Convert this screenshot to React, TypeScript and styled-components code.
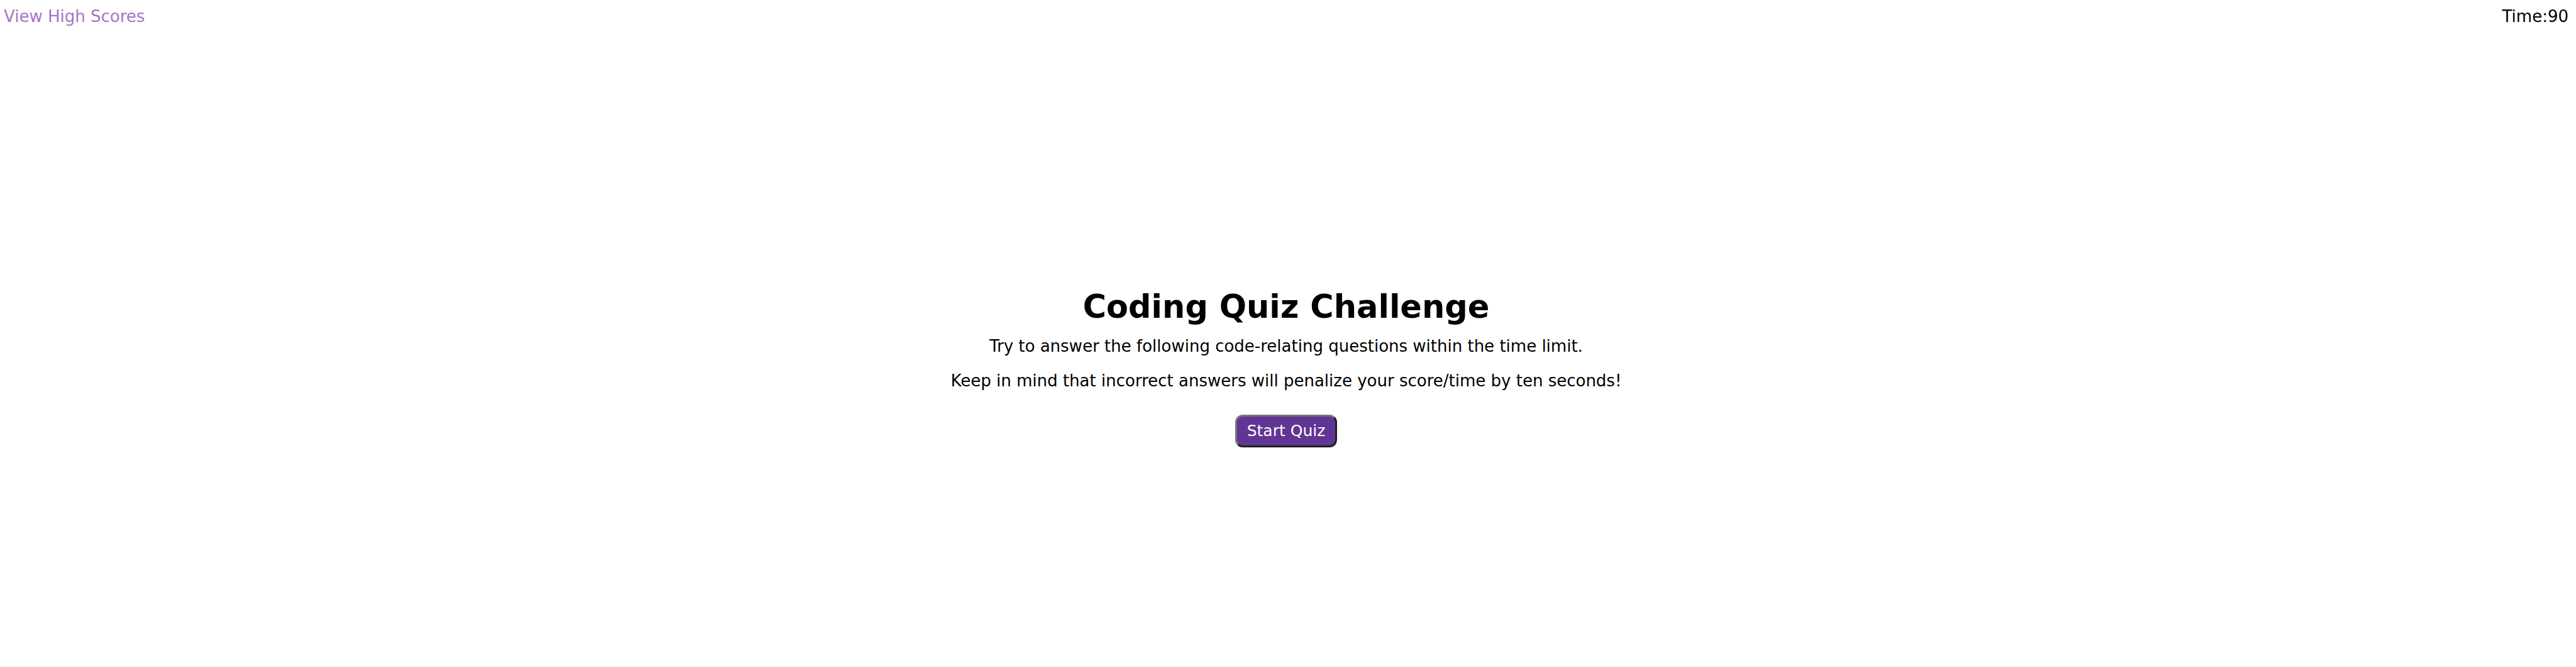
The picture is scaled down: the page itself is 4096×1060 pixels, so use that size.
import React from "react";
import styled, { createGlobalStyle } from "styled-components";

const GlobalStyle = createGlobalStyle`
  * {
    box-sizing: border-box;
  }
  body {
    margin: 0;
    background: #ffffff;
    color: #000000;
    font-family: Verdana, "DejaVu Sans", sans-serif;
    font-size: 26px;
    line-height: 32px;
  }
`;

const Page = styled.div`
  display: flex;
  flex-direction: column;
  min-height: 100vh;
`;

const TopBar = styled.header`
  display: flex;
  justify-content: space-between;
  padding: 10px 12px 10px 6px;
`;

const ScoresLink = styled.a`
  color: #a874c4;
  text-decoration: none;
`;

const Intro = styled.main`
  display: flex;
  flex-direction: column;
  align-items: center;
  padding: 404px 12px 24px 6px;
  text-align: center;
`;

const Title = styled.h1`
  margin: 0 0 14px;
  font-size: 51px;
  line-height: 64px;
  font-weight: 700;
`;

const Text = styled.p`
  margin: 0 0 23px;
`;

const StartButton = styled.button`
  margin-top: 15px;
  padding: 6px 16px;
  border: 3px solid;
  border-color: #767676 #212121 #212121 #767676;
  border-radius: 12px;
  background: #613594;
  color: #ffffff;
  font-family: inherit;
  font-size: 25px;
  line-height: 34px;
  cursor: pointer;
`;

export default function App() {
  return (
    <Page>
      <GlobalStyle />
      <TopBar>
        <ScoresLink href="#scores">View High Scores</ScoresLink>
        <span>Time:90</span>
      </TopBar>
      <Intro>
        <Title>Coding Quiz Challenge</Title>
        <Text>Try to answer the following code-relating questions within the time limit.</Text>
        <Text>Keep in mind that incorrect answers will penalize your score/time by ten seconds!</Text>
        <StartButton type="button">Start Quiz</StartButton>
      </Intro>
    </Page>
  );
}
